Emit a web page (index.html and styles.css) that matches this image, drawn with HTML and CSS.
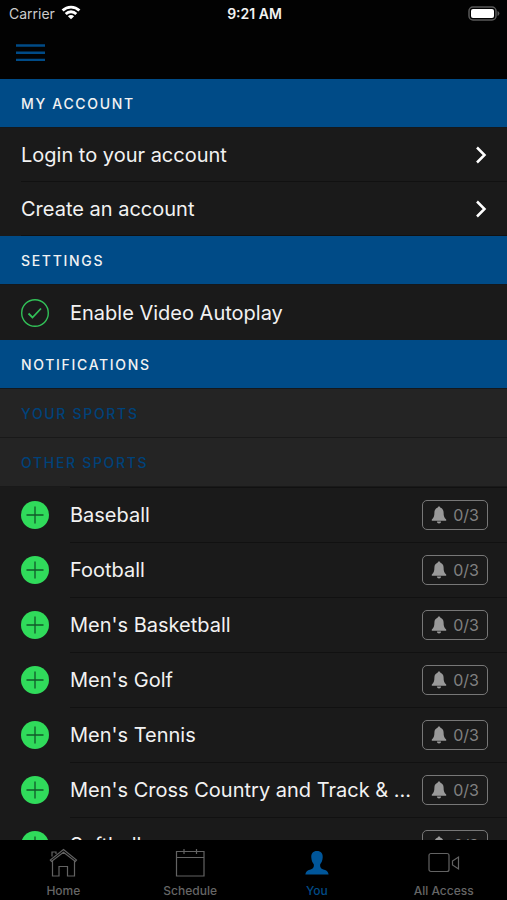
FILE: index.html
```html
<!DOCTYPE html>
<html lang="en">
<head>
<meta charset="utf-8">
<meta name="viewport" content="width=device-width, initial-scale=1">
<title>You</title>
<link rel="stylesheet" href="styles.css">
</head>
<body>
<svg class="sprite" aria-hidden="true">
  <symbol id="bell" viewBox="0 0 16 18"><path d="M8 .6c.8 0 1.3.5 1.4 1.2 2 .6 3.200 2.300 3.200 4.700 0 3.700.7 5.500 2.600 7.100v1.200H.8v-1.200c1.900-1.600 2.600-3.400 2.600-7.100 0-2.400 1.200-4.100 3.200-4.700C6.700 1.100 7.200.6 8 .6zM5.900 15.600h4.200a2.100 1.900 0 0 1-4.200 0z"/></symbol>
  <symbol id="plus" viewBox="0 0 28 28"><circle cx="14" cy="14" r="14" fill="#30db5b"/><path d="M14 5.500v17M5.500 14h17" stroke="#12582a" stroke-width="1.300" fill="none"/></symbol>
  <symbol id="chevron" viewBox="0 0 12 18"><path d="M2 1.500 9.500 9 2 16.500" fill="none" stroke="#fff" stroke-width="2.500"/></symbol>
</svg>
<div class="app">
  <header class="top">
    <div class="status">
      <span class="carrier">Carrier
        <svg width="20" height="15" viewBox="0 0 20 15" aria-hidden="true"><g fill="none" stroke="#fff" stroke-width="2.800"><path d="M1.600 5.600a12 12 0 0 1 16.800 0"/><path d="M4.700 8.900a7.600 7.600 0 0 1 10.600 0"/></g><path d="M10 14.300 6.900 11.200a4.400 4.400 0 0 1 6.200 0z" fill="#fff"/></svg>
      </span>
      <span class="time">9:21 AM</span>
      <svg class="battery" width="32" height="15" viewBox="0 0 32 15" aria-hidden="true"><rect x="1" y="1" width="27" height="13" rx="4" fill="none" stroke="#5a5a5a" stroke-width="1.500"/><rect x="3" y="3" width="23" height="9" rx="2" fill="#fff"/><path d="M29.500 5a2.600 2.600 0 0 1 0 5z" fill="#5a5a5a"/></svg>
    </div>
    <button class="menu" aria-label="Menu"><svg width="29" height="20" viewBox="0 0 29 20"><path d="M0 2.500h29M0 9.700h29M0 16.900h29" stroke="#004b87" stroke-width="2.400"/></svg></button>
  </header>
  <main class="content">
    <h2 class="section">MY ACCOUNT</h2>
    <a class="link" href="#login">Login to your account<svg class="chevron"><use href="#chevron"/></svg></a>
    <a class="link" href="#create">Create an account<svg class="chevron"><use href="#chevron"/></svg></a>
    <h2 class="section">SETTINGS</h2>
    <label class="row"><span class="toggle"><input type="checkbox" checked><svg class="icon" viewBox="0 0 28 28"><circle cx="14" cy="14" r="13.300"/><path d="m7.500 14.500 4 4 8.500-9" stroke-width="1.800"/></svg></span><span class="name">Enable Video Autoplay</span></label>
    <h2 class="section">NOTIFICATIONS</h2>
    <h3 class="section sub">YOUR SPORTS</h3>
    <h3 class="section sub">OTHER SPORTS</h3>
    <ul class="sports">
      <li class="row"><button class="add" aria-label="Add Baseball"><svg class="icon"><use href="#plus"/></svg></button><div class="sport"><span class="name">Baseball</span><button class="count"><svg class="bell"><use href="#bell"/></svg>0/3</button></div></li>
      <li class="row"><button class="add" aria-label="Add Football"><svg class="icon"><use href="#plus"/></svg></button><div class="sport"><span class="name">Football</span><button class="count"><svg class="bell"><use href="#bell"/></svg>0/3</button></div></li>
      <li class="row"><button class="add" aria-label="Add Men's Basketball"><svg class="icon"><use href="#plus"/></svg></button><div class="sport"><span class="name">Men's Basketball</span><button class="count"><svg class="bell"><use href="#bell"/></svg>0/3</button></div></li>
      <li class="row"><button class="add" aria-label="Add Men's Golf"><svg class="icon"><use href="#plus"/></svg></button><div class="sport"><span class="name">Men's Golf</span><button class="count"><svg class="bell"><use href="#bell"/></svg>0/3</button></div></li>
      <li class="row"><button class="add" aria-label="Add Men's Tennis"><svg class="icon"><use href="#plus"/></svg></button><div class="sport"><span class="name">Men's Tennis</span><button class="count"><svg class="bell"><use href="#bell"/></svg>0/3</button></div></li>
      <li class="row"><button class="add" aria-label="Add Men's Cross Country and Track"><svg class="icon"><use href="#plus"/></svg></button><div class="sport"><span class="name">Men's Cross Country and Track &amp; ...</span><button class="count"><svg class="bell"><use href="#bell"/></svg>0/3</button></div></li>
      <li class="row"><button class="add" aria-label="Add Softball"><svg class="icon"><use href="#plus"/></svg></button><div class="sport"><span class="name">Softball</span><button class="count"><svg class="bell"><use href="#bell"/></svg>0/3</button></div></li>
    </ul>
  </main>
  <nav class="tabs">
    <a href="#home"><svg viewBox="0 0 32 30"><path d="M5 8.500V4h4v2M4.500 13.500 3.300 12 16.500 1.500 29.500 12l-1.200 1.500L16.500 4.200zM5.500 13v15H12V18.500h8.500V28h7V13"/></svg>Home</a>
    <a href="#schedule"><svg viewBox="0 0 32 30"><path d="M2.500 3.500h27.500V28H2.500zM2.500 9.500H30M10 1v5M22.500 1v5"/></svg>Schedule</a>
    <a class="active" href="#you"><svg viewBox="0 0 32 30"><path class="solid" d="M16 3c4 0 6 2.500 5.700 6.500-.2 3.500-1.400 5.300-2.500 6.700-.4 2.600.3 4 2.600 5 3.500 1.200 5.400 2 5.800 5.300H4.400c.4-3.300 2.300-4.100 5.800-5.300 2.300-1 3-2.400 2.600-5-1.100-1.400-2.300-3.200-2.500-6.700C10 5.500 12 3 16 3z"/></svg>You</a>
    <a href="#access"><svg viewBox="0 0 32 30"><rect x="1" y="5.500" width="20" height="18" rx="2"/><path d="M24.500 13 30.500 9v12l-6-4z"/></svg>All Access</a>
  </nav>
</div>
</body>
</html>
```
FILE: styles.css
```css
* { box-sizing: border-box; }
body {
  margin: 0;
  background: #020202;
  color: #f2f2f2;
  font-family: Inter, "Liberation Sans", sans-serif;
  font-size: 20px;
}
button { padding: 0; border: 0; background: none; color: inherit; font: inherit; }
a { color: inherit; text-decoration: none; }
svg { display: block; flex: none; }
.sprite { position: absolute; width: 0; height: 0; }

.app { display: flex; flex-direction: column; height: 100vh; }

.top { height: 79px; flex: none; }
.status {
  display: grid;
  grid-template-columns: 1fr auto 1fr;
  align-items: center;
  height: 27px;
  padding: 0 7px 0 9px;
  font-size: 14px;
}
.carrier { display: flex; align-items: center; gap: 6px; color: #ccc; }
.carrier svg { margin-bottom: 2px; }
.time { font-weight: 600; }
.battery { justify-self: end; }
.menu { display: block; margin: 16px 16px; }

.content { flex: 1; min-height: 0; overflow: hidden; background: #1a1a1a; }
.section {
  display: flex;
  align-items: center;
  height: 49px;
  margin: 0;
  padding: 0 21px;
  border-bottom: 1px solid #14181c;
  background: #004b87;
  font-size: 14px;
  font-weight: 500;
  letter-spacing: 0.12em;
}
.sub { background: #242424; border-color: #191919; color: #00427a; }
.link {
  display: flex;
  align-items: center;
  justify-content: space-between;
  height: 54px;
  margin-left: 21px;
  padding-right: 20px;
  border-bottom: 1px solid #111;
}
.chevron { width: 12px; height: 18px; }

.row { display: flex; align-items: center; gap: 21px; height: 55px; padding-left: 21px; }
.icon { width: 28px; height: 28px; }
.toggle { display: grid; }
.toggle > * { grid-area: 1 / 1; }
.toggle input { appearance: none; width: 28px; height: 28px; margin: 0; }
.toggle svg { fill: none; stroke: #32c158; stroke-width: 1.4; pointer-events: none; }
.sports { margin: 0; padding: 0; list-style: none; }
.sport {
  display: flex;
  flex: 1;
  min-width: 0;
  align-items: center;
  justify-content: space-between;
  gap: 8px;
  height: 55px;
  padding-right: 19px;
  border-top: 1px solid #111;
}
.name { min-width: 0; overflow: hidden; white-space: nowrap; }
.count {
  display: flex;
  flex: none;
  align-items: center;
  justify-content: center;
  gap: 6px;
  width: 66px;
  height: 30px;
  border: 1px solid #777;
  border-radius: 5px;
  color: #808080;
  font-size: 16px;
}
.bell { width: 16px; height: 18px; fill: #999; }

.tabs { display: grid; grid-template-columns: repeat(4, 1fr); flex: none; height: 60px; background: #000; }
.tabs a {
  display: flex;
  flex-direction: column;
  align-items: center;
  gap: 6px;
  padding-top: 8px;
  color: #666;
  font-size: 12px;
  font-weight: 500;
  line-height: 14px;
}
.tabs svg { width: 32px; height: 30px; fill: none; stroke: #636363; stroke-width: 1.2; }
.tabs .active { color: #004b87; }
.tabs .solid { fill: #00569a; stroke: none; }
```
